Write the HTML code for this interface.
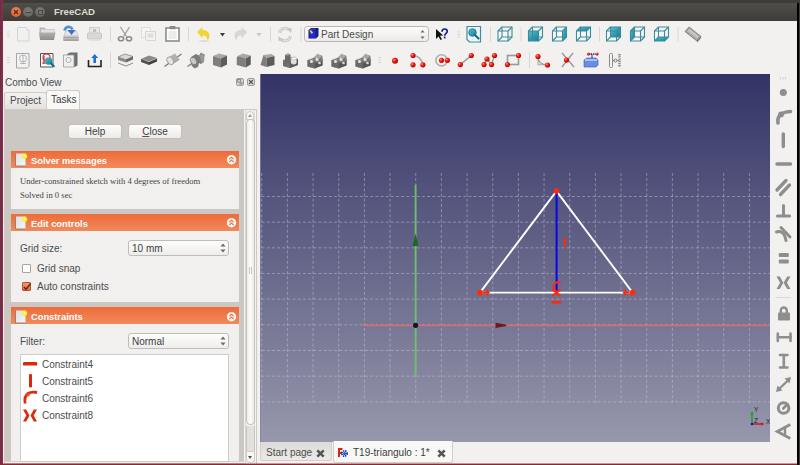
<!DOCTYPE html>
<html><head><meta charset="utf-8">
<style>
html,body{margin:0;padding:0;}
body{width:800px;height:465px;overflow:hidden;position:relative;background:#f2f1f0;font-family:"Liberation Sans",sans-serif;font-size:10px;color:#3c3c3c;}
.a{position:absolute;}
#deskL{z-index:10;left:0;top:0;width:3px;height:465px;background:linear-gradient(90deg,#6a2c4c 0,#7a3050 2px,#962838 2px,#962838 3px);}
#topstrip{left:0;top:0;width:800px;height:3px;background:#3d3c38;}
#title{left:3px;top:3px;width:794px;height:18px;background:linear-gradient(#4f4e4a,#3d3c38);}
#rblk{z-index:10;left:797px;top:3px;width:2px;height:462px;background:#000;}
#rgr{z-index:10;left:799px;top:0;width:1px;height:465px;background:#3d3c38;}
#botm{z-index:10;left:0;top:463px;width:797px;height:2px;background:linear-gradient(rgba(140,44,50,0.45) 0,rgba(140,44,50,0.45) 50%,#8a2a30 50%);}
.btn{border-radius:50%;box-sizing:border-box;}
.tt{font-weight:bold;color:#dfdbd2;font-size:9.6px;}
.btn2{box-sizing:border-box;border:1px solid #c3c0bb;border-radius:3px;background:linear-gradient(#fdfdfd,#ecebe9);text-align:center;line-height:13px;font-size:10px;color:#3c3c3c;}
.hdr{left:11px;width:228px;height:17px;background:linear-gradient(#ee6b39,#f18a5c);}
.body{left:11px;width:228px;background:#f1f0ef;}
.htxt{left:31px;font-weight:bold;color:#fff;font-size:9.3px;line-height:12px;}
.lbl{font-size:10px;line-height:12px;color:#4c4c4c;}
.spin{box-sizing:border-box;border:1px solid #c0bdb8;border-radius:3px;background:linear-gradient(#fdfdfd,#eeedeb);}
.chk{width:9px;height:9px;box-sizing:border-box;border:1px solid #a8a5a0;border-radius:1px;background:#fff;}
</style></head><body>
<div class="a" id="topstrip"></div>
<div class="a" id="title"></div>
<div class="a" id="deskL"></div>
<div class="a" id="rblk"></div>
<div class="a" id="rgr"></div>
<div class="a" id="botm"></div>
<!-- window buttons -->
<div class="a btn" style="left:11px;top:7.3px;width:10px;height:10px;background:radial-gradient(circle at 50% 35%,#f88a5c,#e9602f 70%,#d8572a);"></div>
<svg class="a" style="left:11px;top:7.3px" width="10" height="10"><path d="M3 3l4 4M7 3l-4 4" stroke="#3b2b22" stroke-width="1.2"/></svg>
<div class="a btn" style="left:23.1px;top:7.3px;width:10px;height:10px;background:radial-gradient(circle at 50% 35%,#7d7c77,#67665f 70%,#5a5954);"></div>
<div class="a" style="left:25.6px;top:11.8px;width:5px;height:1.2px;background:#45443f"></div>
<div class="a btn" style="left:35px;top:7.3px;width:10px;height:10px;background:radial-gradient(circle at 50% 35%,#7d7c77,#67665f 70%,#5a5954);"></div>
<div class="a" style="left:38px;top:10.3px;width:3px;height:3px;border:1px solid #4a4944"></div>
<div class="a tt" style="left:54px;top:6px;line-height:12px">FreeCAD</div>
<svg class="a" style="left:0;top:21px" width="800" height="53" viewBox="0 21 800 53">
<defs>
<linearGradient id="gbox" x1="0" y1="0" x2="0" y2="1"><stop offset="0" stop-color="#9a9a9a"/><stop offset="1" stop-color="#5e5e5e"/></linearGradient>
<linearGradient id="gteal" x1="0" y1="0" x2="1" y2="1"><stop offset="0" stop-color="#5bbdd6"/><stop offset="1" stop-color="#0f7f96"/></linearGradient>
<radialGradient id="rdot" cx="0.35" cy="0.35" r="0.7"><stop offset="0" stop-color="#ff9a8a"/><stop offset="0.4" stop-color="#f02010"/><stop offset="1" stop-color="#b00000"/></radialGradient>
</defs>
<rect x="7" y="31.5" width="2.5" height="1" fill="#d3d1cc"/>
<rect x="7" y="34.0" width="2.5" height="1" fill="#d3d1cc"/>
<rect x="7" y="36.5" width="2.5" height="1" fill="#d3d1cc"/>
<path d="M17.5 27.5h9l2.5 2.5v11h-11.5z" fill="#f0f0ef" stroke="#d4d4d2" stroke-width="1"/>
<circle cx="27" cy="29.5" r="1.2" fill="#e0e0e0"/>
<path d="M39.5 27.5h5l1.5 1.5h8.5v4.5h-15z" fill="#b6b6b6"/>
<path d="M41 29.5h13v4h-13z" fill="#e2e2e2"/>
<path d="M39 32.5h16.5l-1.5 7.5h-14z" fill="url(#gfold)"/>
<defs><linearGradient id="gfold" x1="0" y1="0" x2="0" y2="1"><stop offset="0" stop-color="#b0b0b0"/><stop offset="1" stop-color="#8e8e8e"/></linearGradient></defs>
<path d="M65.5 30.5h11l2 5.5v5h-15v-5z" fill="#c4c4c4"/>
<path d="M66 31.5h10l1.6 4h-13.2z" fill="#e6e6e6"/>
<path d="M63.5 37h15v4h-15z" fill="#a2a2a2"/><rect x="64" y="38.3" width="14" height="0.9" fill="#c8c8c8"/>
<path d="M64.5 30.5c0.5-2.5 2.5-4 5-3.5 1.5 0.3 2.5 1.2 3 2.5" fill="none" stroke="#4f8fd6" stroke-width="2.6"/>
<path d="M67.5 30h8l-4 5z" fill="#3a74bc"/>
<rect x="89.5" y="27.5" width="10" height="6" fill="#e6e6e6" stroke="#cfcfcf"/>
<rect x="87.5" y="33" width="14" height="6" rx="1" fill="#d8d8d8" stroke="#c8c8c8"/>
<rect x="89" y="39" width="11" height="2" fill="#e0e0e0"/>
<path d="M93 29h3v3h-3z" fill="#c0c0c0"/>
<rect x="110" y="27" width="1" height="14.5" fill="#d9d7d3"/>
<g fill="none" stroke="#9a9a9a" stroke-width="1.2"><path d="M120.5 27l6 9.5M129.5 27l-6 9.5"/></g><g fill="none" stroke="#8a8a8a" stroke-width="1.6"><ellipse cx="121" cy="38.8" rx="2.6" ry="2"/><ellipse cx="129" cy="38.8" rx="2.6" ry="2"/></g>
<rect x="141.5" y="27.5" width="9" height="10" fill="#f4f4f4" stroke="#dcdcdc"/>
<path d="M145.5 31.5h10v9h-8.5l-1.5-1.5z" fill="#f2f2f2" stroke="#d6d6d6"/>
<rect x="147.5" y="33.5" width="6" height="4" fill="#dedede"/>
<rect x="166" y="28" width="13" height="13" fill="#ffffff" stroke="#8c8c8c" stroke-width="1.6"/>
<rect x="169.5" y="26" width="6" height="3.2" rx="0.8" fill="#8a8a8a"/>
<rect x="168.5" y="31" width="8" height="8" fill="#ececec"/>
<rect x="188" y="27" width="1" height="14.5" fill="#d9d7d3"/>
<path d="M197 32l5.5-5v3c4.5 0 7 2.5 7 6 0 2-1 3.5-2.5 4 0.5-2.5-1-4.5-4.5-4.5v3z" fill="#edd634"/>
<ellipse cx="204" cy="41" rx="5" ry="1" fill="#dedcd8"/>
<path d="M220 33h5l-2.5 3.5z" fill="#3c3c3c"/>
<path d="M247 32l-5.5-5v3c-4.5 0-7 2.5-7 6 0 2 1 3.5 2.5 4-0.5-2.5 1-4.5 4.5-4.5v3z" fill="#d6d6d6"/>
<path d="M256.5 33h5l-2.5 3.5z" fill="#c4c4c4"/>
<rect x="270" y="27" width="1" height="14.5" fill="#d9d7d3"/>
<g fill="none" stroke="#c4c4c4" stroke-width="2.8"><path d="M279.5 33a5.5 5.5 0 0 1 10-2.5"/><path d="M290.5 36a5.5 5.5 0 0 1-10 2.5"/></g>
<g fill="none" stroke="#e4e4e4" stroke-width="1.2"><path d="M279.5 33a5.5 5.5 0 0 1 10-2.5"/><path d="M290.5 36a5.5 5.5 0 0 1-10 2.5"/></g>
<path d="M287 28l4.8 0.3-0.6 4.8z M283 41l-4.8-0.3 0.6-4.8z" fill="#c4c4c4"/>
<rect x="300.5" y="27" width="1" height="14.5" fill="#d9d7d3"/>
<rect x="304.5" y="26.5" width="124" height="15" rx="3" fill="url(#gcombo)" stroke="#b9b6b1"/>
<defs><linearGradient id="gcombo" x1="0" y1="0" x2="0" y2="1"><stop offset="0" stop-color="#fdfdfd"/><stop offset="1" stop-color="#eceae8"/></linearGradient></defs>
<path d="M308.5 30l2.5-2h7.5v8l-2.5 2.5h-7.5z" fill="#1a1a60"/>
<path d="M309.2 30.5h6.5v7.3h-6.5z" fill="#1c2ad8"/>
<path d="M316.3 30.2l1.6-1.4v7l-1.6 1.6z" fill="#1020a0"/>
<path d="M309.3 29.8l1.8-1.2 5 0.2-1 1z" fill="#3a48e8"/>
<path d="M309.2 30.5l2.4 3.5 1.6-1.2-2-2.6z" fill="#f0c838"/>
<text x="321" y="37.5" font-family="Liberation Sans" font-size="10" fill="#4a4a4a">Part Design</text>
<path d="M420.5 32.5h4l-2-2.5z M420.5 36.5h4l-2 2.5z" fill="#6a6a6a"/>
<path d="M436 29v10l2.5-2.5 2 3.5 1.5-0.8-2-3.5 3.2-0.2z" fill="#111"/>
<path d="M442 31.8c0-1.8 1.2-2.8 2.6-2.8 1.5 0 2.6 1 2.6 2.4 0 1.3-0.8 1.8-1.6 2.4-0.6 0.5-0.9 0.9-0.9 1.9" fill="none" stroke="#1c1c96" stroke-width="1.7"/><rect x="443.8" y="36.6" width="1.8" height="1.8" fill="#1c1c96"/>
<rect x="457.5" y="31.5" width="2.5" height="1" fill="#d3d1cc"/>
<rect x="457.5" y="34.0" width="2.5" height="1" fill="#d3d1cc"/>
<rect x="457.5" y="36.5" width="2.5" height="1" fill="#d3d1cc"/>
<path d="M467 26.5h13.5v15.5h-11l-2.5-2.5z" fill="#eef6f8" stroke="#3a8fa0" stroke-width="1.2"/>
<circle cx="472.5" cy="32.5" r="3.8" fill="url(#gteal)" stroke="#1f7385" stroke-width="0.8"/>
<path d="M475 35l3.5 3.5" stroke="#1a6e80" stroke-width="2.2" stroke-linecap="round"/>
<rect x="490" y="27" width="1" height="14.5" fill="#d9d7d3"/>
<polygon points="498,31 508,31 508,41 498,41" fill="#ffffff" fill-opacity="0.6"/>
<g fill="none" stroke="#3a8c9c" stroke-width="1.1"><polygon points="498,31 508,31 508,41 498,41"/><polygon points="502,27 512,27 512,37 502,37"/><line x1="498" y1="31" x2="502" y2="27"/><line x1="508" y1="31" x2="512" y2="27"/><line x1="508" y1="41" x2="512" y2="37"/><line x1="498" y1="41" x2="502" y2="37"/></g>
<rect x="520.5" y="27" width="1" height="14.5" fill="#d9d7d3"/>
<polygon points="528.5,31 538.5,31 538.5,41 528.5,41" fill="#ffffff" fill-opacity="0.6"/>
<polygon points="528.5,31 538.5,31 538.5,41 528.5,41" fill="url(#gteal)"/>
<g fill="none" stroke="#3a8c9c" stroke-width="1.1"><polygon points="528.5,31 538.5,31 538.5,41 528.5,41"/><polygon points="532.5,27 542.5,27 542.5,37 532.5,37"/><line x1="528.5" y1="31" x2="532.5" y2="27"/><line x1="538.5" y1="31" x2="542.5" y2="27"/><line x1="538.5" y1="41" x2="542.5" y2="37"/><line x1="528.5" y1="41" x2="532.5" y2="37"/></g>
<polygon points="552.5,31 562.5,31 562.5,41 552.5,41" fill="#ffffff" fill-opacity="0.6"/>
<polygon points="562.5,31 566.5,27 566.5,37 562.5,41" fill="url(#gteal)"/>
<g fill="none" stroke="#3a8c9c" stroke-width="1.1"><polygon points="552.5,31 562.5,31 562.5,41 552.5,41"/><polygon points="556.5,27 566.5,27 566.5,37 556.5,37"/><line x1="552.5" y1="31" x2="556.5" y2="27"/><line x1="562.5" y1="31" x2="566.5" y2="27"/><line x1="562.5" y1="41" x2="566.5" y2="37"/><line x1="552.5" y1="41" x2="556.5" y2="37"/></g>
<polygon points="576.5,31 586.5,31 586.5,41 576.5,41" fill="#ffffff" fill-opacity="0.6"/>
<polygon points="576.5,31 580.5,27 590.5,27 586.5,31" fill="url(#gteal)"/>
<g fill="none" stroke="#3a8c9c" stroke-width="1.1"><polygon points="576.5,31 586.5,31 586.5,41 576.5,41"/><polygon points="580.5,27 590.5,27 590.5,37 580.5,37"/><line x1="576.5" y1="31" x2="580.5" y2="27"/><line x1="586.5" y1="31" x2="590.5" y2="27"/><line x1="586.5" y1="41" x2="590.5" y2="37"/><line x1="576.5" y1="41" x2="580.5" y2="37"/></g>
<rect x="599" y="27" width="1" height="14.5" fill="#d9d7d3"/>
<polygon points="606.5,31 616.5,31 616.5,41 606.5,41" fill="#ffffff" fill-opacity="0.6"/>
<polygon points="610.5,27 620.5,27 620.5,37 610.5,37" fill="url(#gteal)"/>
<g fill="none" stroke="#3a8c9c" stroke-width="1.1"><polygon points="606.5,31 616.5,31 616.5,41 606.5,41"/><polygon points="610.5,27 620.5,27 620.5,37 610.5,37"/><line x1="606.5" y1="31" x2="610.5" y2="27"/><line x1="616.5" y1="31" x2="620.5" y2="27"/><line x1="616.5" y1="41" x2="620.5" y2="37"/><line x1="606.5" y1="41" x2="610.5" y2="37"/></g>
<polygon points="630.5,31 640.5,31 640.5,41 630.5,41" fill="#ffffff" fill-opacity="0.6"/>
<polygon points="630.5,31 634.5,27 634.5,37 630.5,41" fill="url(#gteal)"/>
<g fill="none" stroke="#3a8c9c" stroke-width="1.1"><polygon points="630.5,31 640.5,31 640.5,41 630.5,41"/><polygon points="634.5,27 644.5,27 644.5,37 634.5,37"/><line x1="630.5" y1="31" x2="634.5" y2="27"/><line x1="640.5" y1="31" x2="644.5" y2="27"/><line x1="640.5" y1="41" x2="644.5" y2="37"/><line x1="630.5" y1="41" x2="634.5" y2="37"/></g>
<polygon points="654.5,31 664.5,31 664.5,41 654.5,41" fill="#ffffff" fill-opacity="0.6"/>
<polygon points="654.5,41 658.5,37 668.5,37 664.5,41" fill="url(#gteal)"/>
<g fill="none" stroke="#3a8c9c" stroke-width="1.1"><polygon points="654.5,31 664.5,31 664.5,41 654.5,41"/><polygon points="658.5,27 668.5,27 668.5,37 658.5,37"/><line x1="654.5" y1="31" x2="658.5" y2="27"/><line x1="664.5" y1="31" x2="668.5" y2="27"/><line x1="664.5" y1="41" x2="668.5" y2="37"/><line x1="654.5" y1="41" x2="658.5" y2="37"/></g>
<rect x="677.5" y="27" width="1" height="14.5" fill="#d9d7d3"/>
<path d="M685 31.5l4-4.5 12 9.5-4 4.5z" fill="#a6a6a6" stroke="#7c7c7c" stroke-width="0.9"/>
<path d="M687.5 31l2-2.2 9.5 7.5-2 2.2z" fill="#c4c4c4"/>
<path d="M697 41l4-4.5v1.5l-4 4.5z" fill="#6a6a6a"/>
<rect x="7" y="57.0" width="2.5" height="1" fill="#d3d1cc"/>
<rect x="7" y="59.5" width="2.5" height="1" fill="#d3d1cc"/>
<rect x="7" y="62.0" width="2.5" height="1" fill="#d3d1cc"/>
<path d="M16.5 53.5h12.5v13l-1.5 1.5h-11z" fill="#f2f2f2" stroke="#a6a6a6"/>
<circle cx="23" cy="58.5" r="3.5" fill="none" stroke="#b4b4b4"/><path d="M20 63.5h6M23 55v9" stroke="#b4b4b4" fill="none"/>
<path d="M40.5 53.5h12.5v13.5h-12.5z" fill="#fafafa" stroke="#555" stroke-width="1"/>
<circle cx="46.5" cy="57.5" r="3.5" fill="none" stroke="#e03020" stroke-width="1.2"/><path d="M42 63h5M44 56v8" stroke="#e03020" stroke-width="1.2"/>
<circle cx="48.5" cy="61" r="3.8" fill="url(#gteal)"/><path d="M51 63.5l2.8 2.8" stroke="#0f6b80" stroke-width="2" stroke-linecap="round"/>
<path d="M67 54l3-1.5h7.5v13l-3 1.5h-7.5z" fill="#6e6e6e"/>
<path d="M63.5 55h10.5v12h-10.5z" fill="#f0f0f0" stroke="#999" stroke-width="0.8"/>
<circle cx="68.5" cy="60" r="2.6" fill="none" stroke="#b0b0b0"/>
<path d="M88.5 60v6.5h12.5v-6.5" fill="none" stroke="#222" stroke-width="1.6"/>
<path d="M94.7 54l-3.5 4h2.2v5h2.6v-5h2.2z" fill="#1f6fd8"/>
<rect x="110" y="52.5" width="1" height="15.5" fill="#d9d7d3"/>
<path d="M118 57l7-3 8 2.5-7 3.5z" fill="#d8d8d8" stroke="#777" stroke-width="0.7"/>
<path d="M118 57v3l8 2.5v-3z" fill="#8a8a8a"/><path d="M126 59.5v3l7-3v-3z" fill="#6a6a6a"/>
<path d="M118 63l8 3 7-3" fill="none" stroke="#8a8a8a" stroke-width="1"/>
<path d="M141 59l8-3.5 8 2.5-8 3.5z" fill="#8a8a8a"/><path d="M141 59v3l8 3v-3z" fill="#505050"/><path d="M149 62v3l8-3.5v-3z" fill="#404040"/>
<path d="M164.5 66.5l17-12.5" stroke="#7a7a7a" stroke-width="1.3"/>
<path d="M168 57.5l7-4 4.5 6-7 4.5z" fill="#b0b0b0"/><path d="M172.5 64l7-4.5v-0.5l-7 4z" fill="#8a8a8a"/>
<ellipse cx="170.3" cy="60.8" rx="3" ry="4.3" transform="rotate(-35 170.3 60.8)" fill="#e2e2e2" stroke="#8a8a8a" stroke-width="0.7"/>
<path d="M187.5 66.5l17-12" stroke="#7a7a7a" stroke-width="1.3"/>
<path d="M191 57l5-3 3 1.5 2-3 3.5 2.5-0.5 7-3 2-2-1-1 4-3.5 1.5-3-3z" fill="#7c7c7c"/>
<ellipse cx="193.5" cy="61" rx="2.8" ry="4" transform="rotate(-30 193.5 61)" fill="#c8c8c8" stroke="#6a6a6a" stroke-width="0.6"/>
<path d="M199 55.5l3-1.5 2 1.5v6l-2 1.5z" fill="#9a9a9a"/>
<path d="M213 56l6-2.5 8 2 -6 3z" fill="#a8a8a8"/><path d="M213 56v9l8 2.5v-9z" fill="#7e7e7e"/><path d="M221 58.5v9l6-3v-9z" fill="#5c5c5c"/>
<path d="M237.75 56l5-2.5 8 2 -5 3z" fill="#a8a8a8"/><path d="M236.75 58l1-2 8 2.5v9l-9-2.5z" fill="#7e7e7e"/><path d="M245.75 58.5v9l5-3v-9z" fill="#5c5c5c"/>
<path d="M263.5 55l8-1 3 2-8 2z" fill="#a8a8a8"/><path d="M263.5 55l3 3v9l-6-2z" fill="#7e7e7e"/><path d="M266.5 58l8-2v9l-8 2z" fill="#5c5c5c"/>
<path d="M283 60l8-3 7 2v6l-8 3-7-2z" fill="#8c8c8c"/><path d="M283 60l7 2v6l-7-2z" fill="#6e6e6e"/><path d="M290 62l8-3v6l-8 3z" fill="#5a5a5a"/>
<path d="M285 55l3-1.5 2.5 1v7l-3 1.5-2.5-1z" fill="#6a6a6a"/><path d="M285 55l3-1.5 2.5 1-3 1.3z" fill="#a0a0a0"/>
<rect x="291" y="58.5" width="5.5" height="4.5" fill="#e8e8e8"/><ellipse cx="293.75" cy="58.5" rx="2.75" ry="1.6" fill="#f8f8f8" stroke="#9a9a9a" stroke-width="0.5"/><ellipse cx="293.75" cy="63" rx="2.75" ry="1.4" fill="#dcdcdc"/>
<path d="M307.5 60l8-3 7 2v6.5l-8 3-7-2z" fill="#8a8a8a"/><path d="M307.5 60l7 2v6.5l-7-2z" fill="#6a6a6a"/><path d="M314.5 62l8-3v6.5l-8 3z" fill="#555"/>
<path d="M313.5 58l4-4 5 2v5l-5 2-4-1z" fill="#7a7a7a"/><path d="M313.5 58l4-4 5 2-4 3z" fill="#a8a8a8"/>
<circle cx="311.5" cy="61.5" r="1.5" fill="#e4e4e4"/><circle cx="317.0" cy="59.5" r="1.5" fill="#e4e4e4"/><circle cx="319.5" cy="63" r="1.3" fill="#d8d8d8"/>
<path d="M331.5 60l8-3 7 2v6.5l-8 3-7-2z" fill="#8a8a8a"/><path d="M331.5 60l7 2v6.5l-7-2z" fill="#6a6a6a"/><path d="M338.5 62l8-3v6.5l-8 3z" fill="#555"/>
<path d="M337.5 58l4-4 5 2v5l-5 2-4-1z" fill="#7a7a7a"/><path d="M337.5 58l4-4 5 2-4 3z" fill="#a8a8a8"/>
<circle cx="335.5" cy="61.5" r="1.5" fill="#e4e4e4"/><circle cx="341.0" cy="59.5" r="1.5" fill="#e4e4e4"/><circle cx="343.5" cy="63" r="1.3" fill="#d8d8d8"/>
<path d="M355.5 60l8-3 7 2v6.5l-8 3-7-2z" fill="#8a8a8a"/><path d="M355.5 60l7 2v6.5l-7-2z" fill="#6a6a6a"/><path d="M362.5 62l8-3v6.5l-8 3z" fill="#555"/>
<path d="M361.5 58l4-4 5 2v5l-5 2-4-1z" fill="#7a7a7a"/><path d="M361.5 58l4-4 5 2-4 3z" fill="#a8a8a8"/>
<circle cx="359.5" cy="61.5" r="1.5" fill="#e4e4e4"/><circle cx="365.0" cy="59.5" r="1.5" fill="#e4e4e4"/><circle cx="367.5" cy="63" r="1.3" fill="#d8d8d8"/>
<rect x="378.5" y="57.0" width="2.5" height="1" fill="#d3d1cc"/>
<rect x="378.5" y="59.5" width="2.5" height="1" fill="#d3d1cc"/>
<rect x="378.5" y="62.0" width="2.5" height="1" fill="#d3d1cc"/>
<circle cx="395" cy="60.8" r="3" fill="url(#rdot)"/>
<path d="M413 55.5c5 0 9 4 9.8 9.4" fill="none" stroke="#a8a8a8" stroke-width="1.6"/>
<circle cx="413" cy="55.5" r="2.6" fill="url(#rdot)"/>
<circle cx="413" cy="64.8" r="2.6" fill="url(#rdot)"/>
<circle cx="422.9" cy="64.8" r="2.6" fill="url(#rdot)"/>
<circle cx="441.5" cy="60.3" r="5.6" fill="none" stroke="#b0b0b0" stroke-width="1.6"/>
<circle cx="441.5" cy="60.3" r="2.6" fill="url(#rdot)"/>
<circle cx="447.4" cy="60.3" r="2.6" fill="url(#rdot)"/>
<path d="M460.3 64.6l11-9.1" stroke="#9a9a9a" stroke-width="1.6"/>
<circle cx="460.3" cy="64.6" r="2.6" fill="url(#rdot)"/>
<circle cx="471.3" cy="55.5" r="2.6" fill="url(#rdot)"/>
<path d="M484 64.6l3-5.6 4.5 5.6 3-9.1" fill="none" stroke="#9a9a9a" stroke-width="1.4"/>
<circle cx="484" cy="64.6" r="2.6" fill="url(#rdot)"/>
<circle cx="487" cy="59" r="2.6" fill="url(#rdot)"/>
<circle cx="491.5" cy="64.6" r="2.6" fill="url(#rdot)"/>
<circle cx="494.5" cy="55.5" r="2.6" fill="url(#rdot)"/>
<rect x="507.5" y="55.5" width="11" height="9" fill="none" stroke="#9a9a9a" stroke-width="1.6"/>
<circle cx="507.5" cy="64.6" r="2.6" fill="url(#rdot)"/>
<circle cx="518.5" cy="55.5" r="2.6" fill="url(#rdot)"/>
<rect x="529" y="52.5" width="1" height="15.5" fill="#d9d7d3"/>
<path d="M538 54v10.5h10" fill="none" stroke="#b8b8b8" stroke-width="1.4"/><path d="M538 57c0 5 4 8 9.5 8" fill="none" stroke="#9a9a9a" stroke-width="1.2"/>
<circle cx="538" cy="56.5" r="2.6" fill="url(#rdot)"/>
<circle cx="547.5" cy="65" r="2.6" fill="url(#rdot)"/>
<path d="M562 53l12 14M573 53l-11 14" stroke="#9a9a9a" stroke-width="1.4"/>
<circle cx="566.5" cy="60" r="2.6" fill="url(#rdot)"/>
<path d="M584 60l3-2h9l2 2v5l-2 2h-12z" fill="#6a8ee0" stroke="#3a5ab0" stroke-width="0.6"/><path d="M585 59h12v2h-12z" fill="#a8c0f0"/><path d="M588 54h9" stroke="#1a2a90" stroke-width="1.4" stroke-dasharray="1.5 1"/><path d="M592 54v4" stroke="#1a2a90"/>
<circle cx="588.5" cy="54" r="1.6" fill="url(#rdot)"/>
<circle cx="597" cy="54" r="1.6" fill="url(#rdot)"/>
<rect x="609.5" y="53.5" width="3" height="14" rx="1" fill="#f4f4f4" stroke="#8a8a8a"/><path d="M619.5 54v13" stroke="#8a8a8a" stroke-width="2.4" stroke-dasharray="1.4 0.8"/><circle cx="615.5" cy="60.5" r="1.5" fill="none" stroke="#777"/><path d="M613 60.5h1M617 60.5h1.5" stroke="#777"/>
</svg><!-- combo view -->
<div class="a" style="left:5px;top:77px;font-size:10px;line-height:12px;color:#4c4c4c">Combo View</div>
<div class="a" style="left:236px;top:78px;width:6px;height:6px;border:1px solid #a09e9a;border-radius:2px;background:#d4d2ce"></div>
<svg class="a" style="left:237px;top:79px" width="6" height="6"><rect x="0.5" y="0.5" width="3" height="2.5" fill="none" stroke="#8a8a8a" stroke-width="0.9"/><rect x="2.5" y="3" width="3" height="2.5" fill="#9a9a9a"/></svg>
<div class="a" style="left:247px;top:78px;width:6px;height:6px;border:1px solid #a09e9a;border-radius:2px;background:#e4e2de"></div>
<svg class="a" style="left:248px;top:79px" width="6" height="6"><path d="M1 1l4 4M5 1l-4 4" stroke="#555" stroke-width="1.3"/></svg>
<!-- tabs -->
<div class="a" style="left:4px;top:92px;width:41px;height:17px;border:1px solid #cfccc7;border-bottom:none;border-radius:3px 3px 0 0;background:linear-gradient(#f3f2f1,#e3e1de)"></div>
<div class="a" style="left:10px;top:95px;font-size:10px;line-height:12px;color:#4c4c4c">Project</div>
<div class="a" style="left:46px;top:90px;width:32px;height:20px;border:1px solid #cfccc7;border-bottom:none;border-radius:3px 3px 0 0;background:#f8f8f7"></div>
<div class="a" style="left:51px;top:94px;font-size:10px;line-height:12px;color:#3c3c3c">Tasks</div>
<!-- frame -->
<div class="a" style="left:4px;top:109px;width:251px;height:356px;border:1px solid #cdcac5;border-bottom:none;background:#f4f3f2"></div>
<div class="a" style="left:5px;top:110px;width:239px;height:354px;background:#cbc8c4"></div>
<!-- scrollbar -->
<div class="a" style="left:245px;top:110px;width:10px;height:354px;background:linear-gradient(90deg,#c2bfbb 0,#f0efee 1px,#f3f2f1 9px,#d0cdc9 10px)"></div>
<div class="a" style="left:246px;top:111px;width:8px;height:9px;border-radius:4px 4px 0 0;background:#f7f7f6;border:1px solid #cfccc8;box-sizing:border-box"></div>
<div class="a" style="left:248px;top:114px;width:0;height:0;border-left:2px solid transparent;border-right:2px solid transparent;border-bottom:3px solid #9a9a9a"></div>
<div class="a" style="left:246px;top:119px;width:9px;height:306px;border-radius:4px;background:linear-gradient(90deg,#eeeeed,#fbfbfa 50%,#ebeae9);border:1px solid #c5c2be;box-sizing:border-box"></div>
<svg class="a" style="left:248px;top:267px" width="5" height="7"><rect x="1" y="0" width="1" height="7" fill="#c8c6c2"/><rect x="3" y="0" width="1" height="7" fill="#c8c6c2"/></svg>
<div class="a" style="left:246px;top:426px;width:9px;height:28px;background:#e3e1de;border-left:1px solid #c8c5c1;border-right:1px solid #c8c5c1;box-sizing:border-box"></div>
<div class="a" style="left:246px;top:451px;width:9px;height:12px;border-radius:0 0 4px 4px;background:#f7f7f6;border:1px solid #cfccc8;box-sizing:border-box"></div>
<div class="a" style="left:248px;top:456px;width:0;height:0;border-left:2.5px solid transparent;border-right:2.5px solid transparent;border-top:3px solid #555"></div>
<!-- help/close -->
<div class="a btn2" style="left:68px;top:124px;width:54px;height:15px;">Help</div>
<div class="a btn2" style="left:128px;top:124px;width:54px;height:15px;"><u style="text-decoration-color:#555">C</u>lose</div>
<!-- solver messages -->
<div class="a hdr" style="top:151px"></div><svg class="a" style="left:11px;top:151px" width="228" height="16"><defs><linearGradient id="pg0" x1="0" y1="0" x2="1" y2="1"><stop offset="0" stop-color="#d9dde1"/><stop offset="1" stop-color="#f6f7f8"/></linearGradient></defs><path d="M4.5 2.5h10v12.5h-10z" fill="url(#pg0)"/><path d="M4.5 2.5v12.5h10" fill="none" stroke="#8c7a70" stroke-width="0.9"/><circle cx="13.7" cy="5.2" r="2.6" fill="#f4f020"/><circle cx="13.5" cy="5" r="1.3" fill="#fffaa0"/><circle cx="220.5" cy="8.8" r="4.7" fill="#fbf8f5"/><path d="M218.3 8.3l2.2-2 2.2 2M218.3 11l2.2-2 2.2 2" fill="none" stroke="#ee7a4a" stroke-width="1.2"/></svg>
<div class="a body" style="top:168px;height:41px"></div>
<div class="a htxt" style="top:154.5px">Solver messages</div>
<div class="a" style="left:20px;top:176px;font-family:'Liberation Serif',serif;font-size:8.6px;line-height:11px;color:#444">Under-constrained sketch with 4 degrees of freedom</div>
<div class="a" style="left:20px;top:190px;font-family:'Liberation Serif',serif;font-size:8.6px;line-height:11px;color:#444">Solved in 0 sec</div>
<!-- edit controls -->
<div class="a hdr" style="top:214px"></div><svg class="a" style="left:11px;top:214px" width="228" height="16"><defs><linearGradient id="pg1" x1="0" y1="0" x2="1" y2="1"><stop offset="0" stop-color="#d9dde1"/><stop offset="1" stop-color="#f6f7f8"/></linearGradient></defs><path d="M4.5 2.5h10v12.5h-10z" fill="url(#pg1)"/><path d="M4.5 2.5v12.5h10" fill="none" stroke="#8c7a70" stroke-width="0.9"/><circle cx="13.7" cy="5.2" r="2.6" fill="#f4f020"/><circle cx="13.5" cy="5" r="1.3" fill="#fffaa0"/><circle cx="220.5" cy="8.8" r="4.7" fill="#fbf8f5"/><path d="M218.3 8.3l2.2-2 2.2 2M218.3 11l2.2-2 2.2 2" fill="none" stroke="#ee7a4a" stroke-width="1.2"/></svg>
<div class="a body" style="top:231px;height:71px"></div>
<div class="a htxt" style="top:217.5px">Edit controls</div>
<div class="a lbl" style="left:20px;top:243px">Grid size:</div>
<div class="a spin" style="left:128px;top:240px;width:101px;height:16px"></div>
<div class="a lbl" style="left:132px;top:243px;color:#3c3c3c">10 mm</div>
<svg class="a" style="left:220px;top:243px" width="6" height="10"><path d="M0.5 3.5h5l-2.5-3z M0.5 6.5h5l-2.5 3z" fill="#6a6a6a"/></svg>
<div class="a chk" style="left:22px;top:264px"></div>
<div class="a lbl" style="left:37px;top:263px">Grid snap</div>
<div class="a chk" style="left:22px;top:282px;background:linear-gradient(#f29a78,#e46a42);border-color:#b8552f"></div>
<svg class="a" style="left:22px;top:282px" width="10" height="10"><path d="M2 5l2 2.5 4.5-6" fill="none" stroke="#5a2a18" stroke-width="1.3"/></svg>
<div class="a lbl" style="left:37px;top:281px">Auto constraints</div>
<!-- constraints -->
<div class="a hdr" style="top:307px"></div><svg class="a" style="left:11px;top:307.5px" width="228" height="16"><defs><linearGradient id="pg2" x1="0" y1="0" x2="1" y2="1"><stop offset="0" stop-color="#d9dde1"/><stop offset="1" stop-color="#f6f7f8"/></linearGradient></defs><path d="M4.5 2.5h10v12.5h-10z" fill="url(#pg2)"/><path d="M4.5 2.5v12.5h10" fill="none" stroke="#8c7a70" stroke-width="0.9"/><circle cx="13.7" cy="5.2" r="2.6" fill="#f4f020"/><circle cx="13.5" cy="5" r="1.3" fill="#fffaa0"/><circle cx="220.5" cy="8.8" r="4.7" fill="#fbf8f5"/><path d="M218.3 8.3l2.2-2 2.2 2M218.3 11l2.2-2 2.2 2" fill="none" stroke="#ee7a4a" stroke-width="1.2"/></svg>
<div class="a body" style="top:324px;height:138px"></div>
<div class="a" style="left:5px;top:461px;width:240px;height:2px;background:linear-gradient(#d6d4d0 0,#d6d4d0 50%,#efeeed 50%)"></div>
<div class="a htxt" style="top:310.5px">Constraints</div>
<div class="a lbl" style="left:20px;top:336px">Filter:</div>
<div class="a spin" style="left:128px;top:333px;width:101px;height:16px"></div>
<div class="a lbl" style="left:132px;top:336px;color:#3c3c3c">Normal</div>
<svg class="a" style="left:220px;top:336px" width="6" height="10"><path d="M0.5 3.5h5l-2.5-3z M0.5 6.5h5l-2.5 3z" fill="#6a6a6a"/></svg>
<div class="a" style="left:20px;top:354px;width:209px;height:108px;background:#fff;border:1px solid #cfccc8;box-sizing:border-box"></div>
<svg class="a" style="left:20px;top:354px" width="20" height="70">
<rect x="3" y="8" width="14.2" height="3.6" rx="1.2" fill="#d8280e"/>
<rect x="9" y="20" width="3" height="13.5" rx="1" fill="#d8280e"/>
<path d="M5.2 49.5c-0.8-4 0-8 2.8-10 2.5-1.5 6-1.5 9-1" fill="none" stroke="#e02a0c" stroke-width="2.8"/><circle cx="7.7" cy="40.5" r="2" fill="#f04a10"/>
<path d="M3 55.5h3.2l3.3 6-3.3 6h-3.2l3.3-6z M17 55.5h-3.2l-3.3 6 3.3 6h3.2l-3.3-6z" fill="#e02a0c"/>
</svg>
<div class="a lbl" style="left:42px;top:359px">Constraint4</div>
<div class="a lbl" style="left:42px;top:376px">Constraint5</div>
<div class="a lbl" style="left:42px;top:393px">Constraint6</div>
<div class="a lbl" style="left:42px;top:410px">Constraint8</div>
<svg class="a" style="left:260px;top:74px" width="510" height="368" viewBox="260 74 510 368">
<defs><linearGradient id="vbg" x1="0" y1="0" x2="0" y2="1">
<stop offset="0" stop-color="#333366"/><stop offset="1" stop-color="#9797ac"/></linearGradient></defs>
<rect x="260" y="74" width="510" height="368" fill="url(#vbg)"/>
<g stroke="#c8c8d8" stroke-opacity="0.47" stroke-width="1" stroke-dasharray="3 2.17"><line x1="261.73" y1="172.9" x2="261.73" y2="402.8"/><line x1="287.4" y1="172.9" x2="287.4" y2="402.8"/><line x1="313.07" y1="172.9" x2="313.07" y2="402.8"/><line x1="338.73" y1="172.9" x2="338.73" y2="402.8"/><line x1="364.4" y1="172.9" x2="364.4" y2="402.8"/><line x1="390.07" y1="172.9" x2="390.07" y2="402.8"/><line x1="415.74" y1="172.9" x2="415.74" y2="402.8"/><line x1="441.4" y1="172.9" x2="441.4" y2="402.8"/><line x1="467.07" y1="172.9" x2="467.07" y2="402.8"/><line x1="492.74" y1="172.9" x2="492.74" y2="402.8"/><line x1="518.4" y1="172.9" x2="518.4" y2="402.8"/><line x1="544.07" y1="172.9" x2="544.07" y2="402.8"/><line x1="569.74" y1="172.9" x2="569.74" y2="402.8"/><line x1="595.4" y1="172.9" x2="595.4" y2="402.8"/><line x1="621.07" y1="172.9" x2="621.07" y2="402.8"/><line x1="646.74" y1="172.9" x2="646.74" y2="402.8"/><line x1="672.4" y1="172.9" x2="672.4" y2="402.8"/><line x1="698.07" y1="172.9" x2="698.07" y2="402.8"/><line x1="723.74" y1="172.9" x2="723.74" y2="402.8"/><line x1="749.41" y1="172.9" x2="749.41" y2="402.8"/><line x1="261.6" y1="196.5" x2="770" y2="196.5"/><line x1="261.6" y1="222.17" x2="770" y2="222.17"/><line x1="261.6" y1="247.83" x2="770" y2="247.83"/><line x1="261.6" y1="273.5" x2="770" y2="273.5"/><line x1="261.6" y1="299.17" x2="770" y2="299.17"/><line x1="261.6" y1="324.84" x2="770" y2="324.84"/><line x1="261.6" y1="350.5" x2="770" y2="350.5"/><line x1="261.6" y1="376.17" x2="770" y2="376.17"/><line x1="261.6" y1="401.84" x2="770" y2="401.84"/></g>
<line x1="363.5" y1="325.5" x2="770" y2="325.5" stroke="#e06a6a" stroke-width="1.5"/>
<path d="M495.5 322.8v5.2l11-2v-1.2z" fill="#701818"/>
<line x1="415.6" y1="184.7" x2="415.6" y2="376" stroke="#68c468" stroke-width="1.8"/>
<path d="M413 246v-1.5l2.6-11 2.6 11v1.5z" fill="#1a6a1a"/>
<circle cx="415.6" cy="325.3" r="2.6" fill="#14142e"/>
<g stroke="#ffffff" stroke-width="1.9" fill="none" stroke-linecap="round"><line x1="480" y1="292.6" x2="556.5" y2="191.1"/><line x1="632.6" y1="292.6" x2="556.5" y2="191.1"/><line x1="480" y1="292.6" x2="632.6" y2="292.6"/></g>
<line x1="556.6" y1="191.1" x2="556.6" y2="292" stroke="#0606e6" stroke-width="2"/>
<g fill="#ff2a0a"><circle cx="556.4" cy="191.1" r="2.8"/><circle cx="480" cy="292.7" r="2.9"/><circle cx="632.6" cy="292.6" r="2.9"/>
<path d="M483 291.5h3.5v-2.5l3.5 3.6-3.5 3.6v-2.5h-3.5z"/>
<path d="M629.5 291.5h-3.5v-2.5l-3.5 3.6 3.5 3.6v-2.5h3.5z"/>
<rect x="551.5" y="301" width="9.5" height="2.6"/>
<rect x="564" y="237.8" width="2.2" height="8.8"/>
</g>
<path d="M560 282.5c-3-1-6.5 0.5-6.5 4 0 2.5 1 4 2.5 5" fill="none" stroke="#ff2a0a" stroke-width="2.2" stroke-linecap="round"/>
<path d="M552.5 289.5l8 6.5M560.5 289.5l-8 6.5" stroke="#ff2a0a" stroke-width="2.2"/>
<line x1="752" y1="424" x2="752" y2="412" stroke="#20a020" stroke-width="1.5"/><path d="M750.3 414.5l1.7-3.5 1.7 3.5z" fill="#20a020"/>
<line x1="752" y1="424" x2="763" y2="424" stroke="#c02020" stroke-width="1.5"/><path d="M761 422.3l3.5 1.7-3.5 1.7z" fill="#c02020"/>
<circle cx="752" cy="424" r="1.3" fill="#1010c0"/>
<g font-family="Liberation Sans" font-size="6.5" fill="#222"><text x="754" y="411.5">Y</text><text x="754" y="423">Z</text><text x="766" y="423.5">X</text></g>
<rect x="260" y="74" width="1" height="368" fill="#8484a4" fill-opacity="0.7"/>
</svg><!-- right vertical toolbar -->
<svg class="a" style="left:770px;top:74px" width="27" height="368" viewBox="770 74 27 368">
<g fill="#d6d4cf"><rect x="780" y="77" width="1" height="2.5"/><rect x="782.5" y="77" width="1" height="2.5"/><rect x="785" y="77" width="1" height="2.5"/></g>
<g fill="#8e8e8e" stroke="#8e8e8e" stroke-linecap="round">
<circle cx="783.3" cy="92.5" r="3.5" stroke="none"/>
<path d="M778 123c-1-7 3-11 12.5-11.5" fill="none" stroke-width="3.6"/>
<circle cx="781" cy="114.5" r="2.9" stroke="none"/>
<path d="M783.3 134v12.5" stroke-width="3.4"/>
<path d="M777 164h13.5" stroke-width="3.4"/>
<path d="M777 190l9-9.5M780.5 194.5l9-9.5" stroke-width="3.3"/>
<path d="M783.5 205.5v10" stroke-width="3"/><path d="M777.5 216h12" stroke-width="3.2"/>
<path d="M781 227.5l9 9.5" stroke-width="3"/><path d="M776.5 232c4-1.5 8 0.5 9.5 8.5" fill="none" stroke-width="3"/>
<rect x="778.8" y="253" width="10" height="4" rx="1" stroke="none"/><rect x="778.8" y="259.6" width="10" height="4" rx="1" stroke="none"/>
<path d="M776.5 276.5h3.3l3.6 6.3-3.6 6.3h-3.3l3.6-6.3z M790.5 276.5h-3.3l-3.6 6.3 3.6 6.3h3.3l-3.6-6.3z" stroke="none"/>
</g>
<rect x="776" y="297" width="15" height="1" fill="#dad8d4"/>
<g fill="#8e8e8e" stroke="#8e8e8e" stroke-linecap="round">
<path d="M780.8 313v-2.5a3 3 0 0 1 6 0v2.5" fill="none" stroke-width="2.4"/>
<rect x="778" y="312.5" width="12" height="8" rx="1" stroke="none"/>
<path d="M778 337.2h12.5" stroke-width="2.6"/><path d="M777.8 333.5v7.5M790.5 333.5v7.5" stroke-width="2.6"/>
<path d="M783.8 355v12" stroke-width="2.6"/><path d="M780 355h7.5M780 367.5h7.5" stroke-width="2.6"/>
<path d="M778.5 389.5l10.5-10" stroke-width="2.4"/><path d="M776 392l1.5-6.5 5 5z M791 377l-1.5 6.5-5-5z" stroke="none"/>
<circle cx="783.6" cy="408" r="5.3" fill="none" stroke-width="3"/><path d="M783.2 408.5l4-4" stroke-width="2.6"/>
<path d="M790.3 424.5l-13 7 13 7" fill="none" stroke-width="2.8" stroke-linecap="butt" stroke-linejoin="miter"/><path d="M785 427.5v8" stroke-width="2.4"/>
</g>
</svg>
<!-- bottom tabs -->
<div class="a" style="left:260px;top:442px;width:72px;height:19px;box-sizing:border-box;border:1px solid #d3d0cc;border-top:none;border-radius:0 0 3px 3px;background:linear-gradient(#dddbd7,#eceae8)"></div>
<div class="a" style="left:266px;top:447px;font-size:10px;line-height:12px;color:#4c4c4c">Start page</div>
<svg class="a" style="left:316px;top:448.5px" width="9" height="9"><path d="M1.3 1.3l6.4 6.4M7.7 1.3l-6.4 6.4" stroke="#555" stroke-width="2.5"/></svg>
<div class="a" style="left:333px;top:441px;width:120px;height:22px;box-sizing:border-box;border:1px solid #d3d0cc;border-top:none;border-radius:0 0 3px 3px;background:#f8f8f7"></div>
<svg class="a" style="left:337px;top:447px" width="12" height="11"><path d="M1 1h4.5v2h-2.5v2h2v2h-2v3h-2z" fill="#e02010"/><circle cx="7.5" cy="6.5" r="2.6" fill="none" stroke="#1a3aa8" stroke-width="1.8" stroke-dasharray="1.3 0.8"/><circle cx="7.5" cy="6.5" r="1.5" fill="#2a4ac0"/></svg>
<div class="a" style="left:353px;top:447px;font-size:10px;line-height:12px;color:#3c3c3c">T19-triangulo : 1*</div>
<svg class="a" style="left:436.5px;top:449px" width="9" height="9"><path d="M1.3 1.3l6.4 6.4M7.7 1.3l-6.4 6.4" stroke="#555" stroke-width="2.5"/></svg>
</body></html>
